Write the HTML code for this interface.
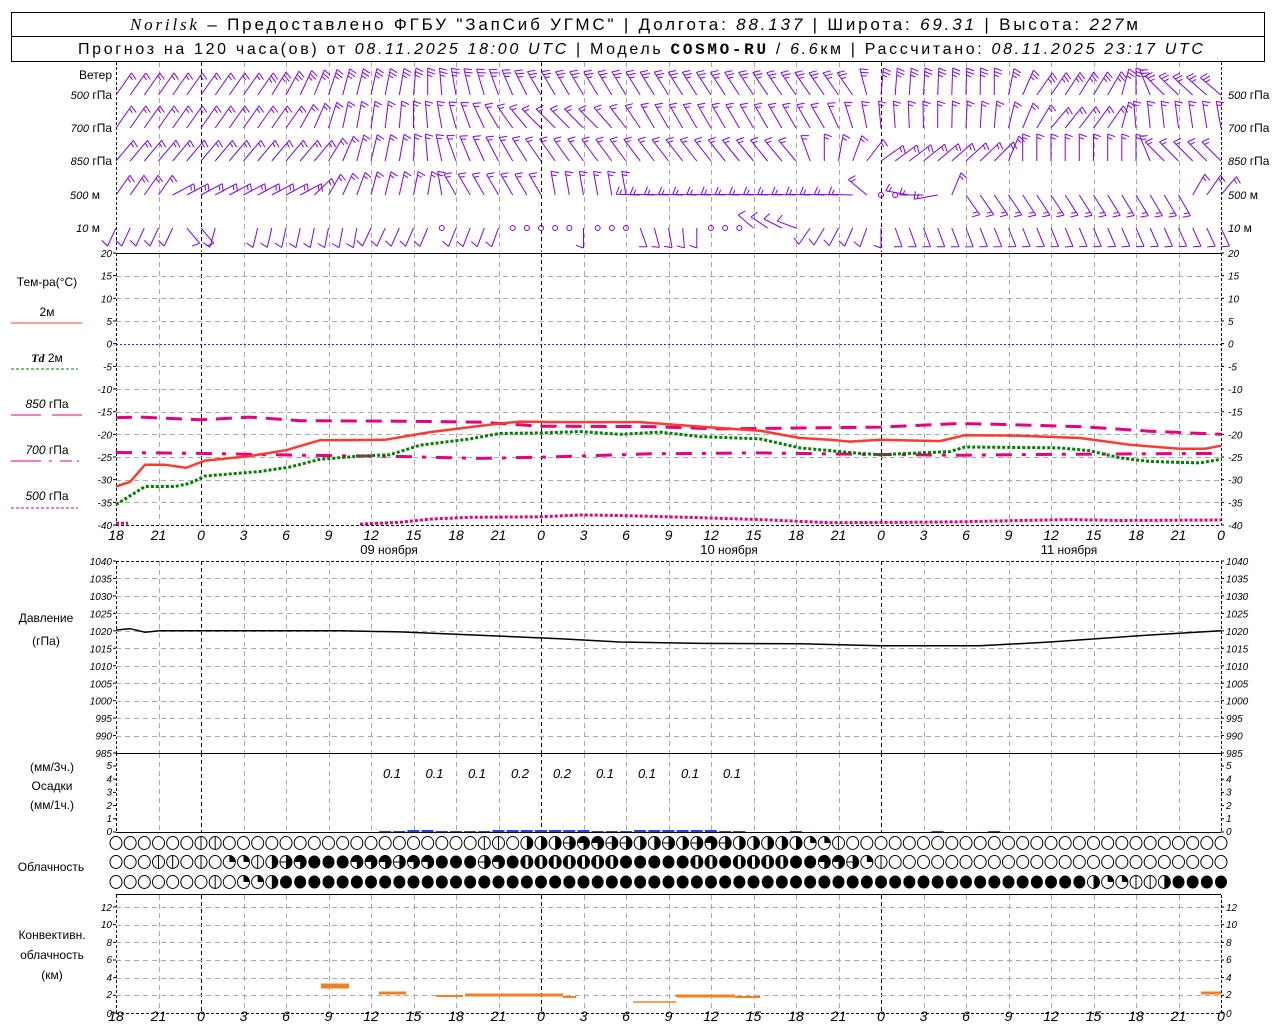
<!DOCTYPE html>
<html><head><meta charset="utf-8">
<style>
html,body{margin:0;padding:0;background:#fff;}
svg{display:block;font-family:"Liberation Sans","DejaVu Sans",sans-serif;}
.t{font-size:12px;fill:#000;}
.n{font-size:10px;font-style:italic;fill:#000;}
.ax{font-size:14px;font-style:italic;fill:#000;}
.pr{font-size:13px;font-style:italic;fill:#000;}
</style></head>
<body>
<svg id="s" width="1280" height="1024" viewBox="0 0 1280 1024" xmlns="http://www.w3.org/2000/svg">
<rect x="0" y="0" width="1280" height="1024" fill="#fff"/>
<g id="grid"></g>
<g id="dyn"></g>
<!-- header -->
<rect x="11.5" y="12.5" width="1253" height="49" fill="none" stroke="#000"/>
<line x1="11" y1="36.5" x2="1265" y2="36.5" stroke="#000"/>
<text x="130" y="30" font-size="17" textLength="1008" lengthAdjust="spacing"><tspan font-family="Liberation Serif,serif" font-style="italic">Norilsk</tspan> – Предоставлено ФГБУ "ЗапСиб УГМС" | Долгота: <tspan font-style="italic">88.137</tspan> | Широта: <tspan font-style="italic">69.31</tspan> | Высота: <tspan font-style="italic">227</tspan>м</text>
<text x="78" y="54" font-size="16" textLength="1125" lengthAdjust="spacing">Прогноз на 120 часа(ов) от <tspan font-style="italic">08.11.2025 18:00 UTC</tspan>  | Модель <tspan font-family="Liberation Mono,monospace" font-weight="bold">COSMO-RU</tspan> / <tspan font-style="italic">6.6</tspan>км | Рассчитано: <tspan font-style="italic">08.11.2025 23:17 UTC</tspan></text>

<!-- wind labels -->
<g class="t" text-anchor="end">
<text x="112" y="79">Ветер</text>
<text x="112" y="99"><tspan font-style="italic" font-size="11">500</tspan> гПа</text>
<text x="112" y="132"><tspan font-style="italic" font-size="11">700</tspan> гПа</text>
<text x="112" y="165"><tspan font-style="italic" font-size="11">850</tspan> гПа</text>
<text x="100" y="199"><tspan font-style="italic" font-size="11">500</tspan> м</text>
<text x="100" y="232"><tspan font-style="italic" font-size="11">10</tspan>   м</text>
</g>
<g class="t">
<text x="1228" y="99"><tspan font-style="italic" font-size="11">500</tspan> гПа</text>
<text x="1228" y="132"><tspan font-style="italic" font-size="11">700</tspan> гПа</text>
<text x="1228" y="165"><tspan font-style="italic" font-size="11">850</tspan> гПа</text>
<text x="1228" y="199"><tspan font-style="italic" font-size="11">500</tspan>  м</text>
<text x="1228" y="232"><tspan font-style="italic" font-size="11">10</tspan>   м</text>
</g>

<!-- temperature legend -->
<g class="t" text-anchor="middle">
<text x="47" y="286">Тем-ра(°С)</text>
<text x="47" y="316">2м</text>
<text x="47" y="362"><tspan font-style="italic" font-weight="bold" font-family="Liberation Serif,serif">Td</tspan>  2м</text>
<text x="47" y="408"><tspan font-style="italic">850</tspan>  гПа</text>
<text x="47" y="454"><tspan font-style="italic">700</tspan>  гПа</text>
<text x="47" y="500"><tspan font-style="italic">500</tspan>  гПа</text>
</g>
<line x1="11" y1="323" x2="82" y2="323" stroke="#ff3b30" stroke-width="1"/>
<line x1="11" y1="369" x2="78" y2="369" stroke="#008000" stroke-width="1" stroke-dasharray="3,2"/>
<line x1="11" y1="415" x2="41" y2="415" stroke="#e6007e"/><line x1="52" y1="415" x2="82" y2="415" stroke="#e6007e"/>
<line x1="11" y1="461" x2="41" y2="461" stroke="#e6007e"/><line x1="49" y1="461" x2="52" y2="461" stroke="#e6007e"/><line x1="60" y1="461" x2="72" y2="461" stroke="#e6007e"/><line x1="77" y1="461" x2="79" y2="461" stroke="#e6007e"/>
<line x1="11" y1="508" x2="78" y2="508" stroke="#e6007e" stroke-dasharray="3,2"/>

<!-- temp axis labels -->
<g class="n" text-anchor="end">
<text x="112" y="257">20</text><text x="112" y="279.7">15</text><text x="112" y="302.3">10</text><text x="112" y="325">5</text><text x="112" y="347.7">0</text><text x="112" y="370.3">-5</text><text x="112" y="393">-10</text><text x="112" y="415.7">-15</text><text x="112" y="438.3">-20</text><text x="112" y="461">-25</text><text x="112" y="483.7">-30</text><text x="112" y="506.3">-35</text><text x="112" y="529">-40</text>
</g>
<g class="n">
<text x="1228" y="257">20</text><text x="1228" y="279.7">15</text><text x="1228" y="302.3">10</text><text x="1228" y="325">5</text><text x="1228" y="347.7">0</text><text x="1228" y="370.3">-5</text><text x="1228" y="393">-10</text><text x="1228" y="415.7">-15</text><text x="1228" y="438.3">-20</text><text x="1228" y="461">-25</text><text x="1228" y="483.7">-30</text><text x="1228" y="506.3">-35</text><text x="1228" y="529">-40</text>
</g>
<g class="ax" text-anchor="middle">
<text x="116" y="540">18</text><text x="158.5" y="540">21</text><text x="201" y="540">0</text><text x="243.5" y="540">3</text><text x="286" y="540">6</text><text x="328.5" y="540">9</text><text x="371" y="540">12</text><text x="413.5" y="540">15</text><text x="456" y="540">18</text><text x="498.5" y="540">21</text><text x="541" y="540">0</text><text x="583.5" y="540">3</text><text x="626" y="540">6</text><text x="668.5" y="540">9</text><text x="711" y="540">12</text><text x="753.5" y="540">15</text><text x="796" y="540">18</text><text x="838.5" y="540">21</text><text x="881" y="540">0</text><text x="923.5" y="540">3</text><text x="966" y="540">6</text><text x="1008.5" y="540">9</text><text x="1051" y="540">12</text><text x="1093.5" y="540">15</text><text x="1136" y="540">18</text><text x="1178.5" y="540">21</text><text x="1221" y="540">0</text>
</g>
<g class="t" text-anchor="middle">
<text x="389" y="554"><tspan font-size="13">09</tspan> ноября</text>
<text x="729" y="554"><tspan font-size="13">10</tspan> ноября</text>
<text x="1069" y="554"><tspan font-size="13">11</tspan> ноября</text>
</g>

<!-- pressure -->
<g class="t" text-anchor="middle"><text x="46" y="622">Давление</text><text x="46" y="645">(гПа)</text></g>
<g class="n" font-size="9" text-anchor="end">
<text x="112" y="565">1040</text><text x="112" y="582.5">1035</text><text x="112" y="599.9">1030</text><text x="112" y="617.4">1025</text><text x="112" y="634.9">1020</text><text x="112" y="652.3">1015</text><text x="112" y="669.8">1010</text><text x="112" y="687.3">1005</text><text x="112" y="704.7">1000</text><text x="112" y="722.2">995</text><text x="112" y="739.7">990</text><text x="112" y="757">985</text>
</g>
<g class="n" font-size="9">
<text x="1226" y="565">1040</text><text x="1226" y="582.5">1035</text><text x="1226" y="599.9">1030</text><text x="1226" y="617.4">1025</text><text x="1226" y="634.9">1020</text><text x="1226" y="652.3">1015</text><text x="1226" y="669.8">1010</text><text x="1226" y="687.3">1005</text><text x="1226" y="704.7">1000</text><text x="1226" y="722.2">995</text><text x="1226" y="739.7">990</text><text x="1226" y="757">985</text>
</g>

<!-- precip -->
<g class="t" text-anchor="middle"><text x="52" y="771">(мм/3ч.)</text><text x="52" y="790">Осадки</text><text x="52" y="809">(мм/1ч.)</text></g>
<g class="n" font-size="9" text-anchor="end">
<text x="112" y="769">5</text><text x="112" y="782.5">4</text><text x="112" y="795.7">3</text><text x="112" y="808.9">2</text><text x="112" y="822">1</text><text x="112" y="835">0</text>
</g>
<g class="n" font-size="9">
<text x="1226" y="769">5</text><text x="1226" y="782.5">4</text><text x="1226" y="795.7">3</text><text x="1226" y="808.9">2</text><text x="1226" y="822">1</text><text x="1226" y="835">0</text>
</g>
<g class="pr" text-anchor="middle">
<text x="392" y="778">0.1</text><text x="434.5" y="778">0.1</text><text x="477" y="778">0.1</text><text x="520" y="778">0.2</text><text x="562" y="778">0.2</text><text x="605" y="778">0.1</text><text x="647" y="778">0.1</text><text x="690" y="778">0.1</text><text x="732" y="778">0.1</text>
</g>

<!-- clouds -->
<text class="t" x="51" y="871" text-anchor="middle">Облачность</text>
<g class="t" text-anchor="middle"><text x="52" y="939">Конвективн.</text><text x="52" y="959">облачность</text><text x="52" y="979">(км)</text></g>
<g class="n" font-size="9" text-anchor="end">
<text x="112" y="911">12</text><text x="112" y="928">10</text><text x="112" y="946">8</text><text x="112" y="963">6</text><text x="112" y="981">4</text><text x="112" y="998">2</text><text x="112" y="1017">0</text>
</g>
<g class="n" font-size="9">
<text x="1226" y="911">12</text><text x="1226" y="928">10</text><text x="1226" y="946">8</text><text x="1226" y="963">6</text><text x="1226" y="981">4</text><text x="1226" y="998">2</text><text x="1226" y="1017">0</text>
</g>
<g class="ax" text-anchor="middle">
<text x="116" y="1021">18</text><text x="158.5" y="1021">21</text><text x="201" y="1021">0</text><text x="243.5" y="1021">3</text><text x="286" y="1021">6</text><text x="328.5" y="1021">9</text><text x="371" y="1021">12</text><text x="413.5" y="1021">15</text><text x="456" y="1021">18</text><text x="498.5" y="1021">21</text><text x="541" y="1021">0</text><text x="583.5" y="1021">3</text><text x="626" y="1021">6</text><text x="668.5" y="1021">9</text><text x="711" y="1021">12</text><text x="753.5" y="1021">15</text><text x="796" y="1021">18</text><text x="838.5" y="1021">21</text><text x="881" y="1021">0</text><text x="923.5" y="1021">3</text><text x="966" y="1021">6</text><text x="1008.5" y="1021">9</text><text x="1051" y="1021">12</text><text x="1093.5" y="1021">15</text><text x="1136" y="1021">18</text><text x="1178.5" y="1021">21</text><text x="1221" y="1021">0</text>
</g>
</svg>
<script>
(function(){
var NS="http://www.w3.org/2000/svg";
var G=document.getElementById("grid"),D=document.getElementById("dyn");
function el(p,tag,a){var e=document.createElementNS(NS,tag);for(var k in a)e.setAttribute(k,a[k]);p.appendChild(e);return e;}
function L(p,x1,y1,x2,y2,c,w,da){var a={x1:x1,y1:y1,x2:x2,y2:y2,stroke:c,"stroke-width":w||1};if(da)a["stroke-dasharray"]=da;return el(p,"line",a);}
function X(h){return 116+h*1105/78;}
var panels=[[62,252],[253,525],[561,753],[753,832],[895,1013]];
for(var k=0;k<=26;k++){
  var x=Math.round(116+k*42.5)+0.5;
  var mid=(k==2||k==10||k==18);
  panels.forEach(function(p){
    if(k==0||k==26) L(G,x,p[0],x,p[1],"#000",1,"3,2");
    else if(mid) L(G,x,p[0],x,p[1],"#000",1,"4,3");
    else L(G,x,p[0],x,p[1],"#aaa",1,"5,4");
  });
}
function hl(y,c,da,w){L(G,116,y,1221,y,c,w||1,da);}
hl(253.5,"#000");
for(var t=15;t>=-35;t-=5){var y=Math.round(253+(20-t)*4.5333)+0.5; if(t==0) hl(y,"#0033ff","2,2"); else hl(y,"#aaa","5,4");}
hl(525.5,"#000","3,2");
for(var i=0;i<=11;i++){var y=Math.round(561+i*17.4545)+0.5; if(i==0) hl(y,"#000","3,2"); else if(i==11) hl(753.5,"#000"); else hl(y,"#aaa","5,4");}
hl(832.5,"#000");
hl(894.5,"#000");
for(var v=2;v<=12;v+=2){hl(Math.round(1013-v*8.83)+0.5,"#aaa","5,4");}
hl(1013.5,"#000","3,2");
[[253,525,13],[561,753,12],[766,832,6],[907,1013,7]].forEach(function(a){
  for(var i=0;i<a[2];i++){var y=a[0]+(a[1]-a[0])*i/(a[2]-1);L(G,113,y,116,y,"#000");L(G,1221,y,1224,y,"#000");}
});
function poly(pts,c,w,da,fy){var s=pts.map(function(p){return X((p[0]-116)/1105*78).toFixed(1)+","+fy(p[1]).toFixed(1);}).join(" ");var a={points:s,fill:"none",stroke:c,"stroke-width":w};if(da)a["stroke-dasharray"]=da;el(D,"polyline",a);}
function TY(t){return 253+(20-t)*4.5333;}
function PY(p){return 561+(1040-p)*3.4909;}
poly([[116,-16.3],[140,-16.2],[200,-16.8],[250,-16.2],[300,-17],[400,-17.1],[480,-17.3],[540,-18.2],[650,-18.3],[720,-18.8],[800,-18.6],[880,-18.4],[960,-17.6],[1000,-17.8],[1080,-18.3],[1150,-19.3],[1221,-20]],"#e6007e",3,"16,9",TY);
poly([[116,-24],[200,-24.2],[300,-24.6],[400,-24.9],[480,-25.3],[550,-25],[650,-24.3],[760,-24.1],[860,-24.4],[960,-24.6],[1060,-24.4],[1221,-24.2]],"#e6007e",3,"16,10,4,10",TY);
poly([[116,-39.6],[128,-39.6]],"#e6007e",3,"3,2",TY);
poly([[360,-39.8],[400,-39.4],[430,-38.7],[470,-38.3],[540,-38.2],[580,-37.8],[620,-37.9],[700,-38.4],[760,-38.8],[830,-39.5],[900,-39.4],[960,-39.3],[1020,-39],[1070,-38.8],[1120,-39],[1221,-38.9]],"#e6007e",3,"3,2",TY);
poly([[116,-35.5],[145,-31.5],[175,-31.5],[190,-30.8],[205,-29.2],[260,-28.2],[290,-27.2],[320,-25.5],[360,-24.8],[390,-24.5],[420,-22.4],[470,-21],[500,-19.8],[540,-19.7],[580,-19.4],[620,-20],[660,-19.5],[700,-20.5],[760,-21],[800,-23],[860,-24.2],[880,-24.5],[950,-23.8],[965,-22.8],[1060,-23],[1090,-23.6],[1120,-25.2],[1150,-26],[1200,-26.3],[1221,-25.5]],"#008000",3,"3,2",TY);
poly([[116,-31.5],[130,-30.5],[145,-26.7],[165,-26.7],[186,-27.4],[205,-25.8],[250,-24.8],[286,-23.5],[320,-21.3],[385,-21.2],[430,-19.5],[470,-18.4],[500,-17.6],[520,-17.2],[560,-17.3],[640,-17.3],[700,-18.3],[760,-19.2],[800,-20.8],[830,-21.2],[850,-21.6],[880,-21.2],[940,-21.5],[965,-20.2],[1020,-20.3],[1080,-20.8],[1130,-22.3],[1180,-23.2],[1205,-23.2],[1221,-22.5]],"#ff3b30",2.5,null,TY);
poly([[116,1020.2],[130,1020.6],[145,1019.6],[160,1020],[340,1020],[400,1019.7],[450,1019.1],[500,1018.5],[560,1017.7],[620,1016.8],[700,1016.4],[800,1016.3],[880,1015.7],[980,1015.7],[1050,1016.8],[1150,1018.8],[1221,1020]],"#000",1.5,null,PY);
var pb={19:1,20:1,21:2,22:2,23:1,24:1,25:1,26:1,27:2,28:2,29:2,30:2,31:2,32:2,33:2,34:1,35:1,36:1,37:2,38:2,39:2,40:2,41:2,42:2,43:1,44:1,48:1,58:1,62:1};
for(var h in pb){el(D,"rect",{x:X(+h-0.5)+1,y:832-pb[h],width:12,height:pb[h],fill:"#1f3fff"});}
[[321,349,986,5],[379,406,993,3],[436,463,996,2],[465,563,995,3],[563,576,997,2],[633,676,1002,1.5],[676,735,996,3],[735,760,997,2],[1201,1221,993,3]].forEach(function(b){el(D,"rect",{x:b[0],y:b[2]-b[3]/2,width:b[1]-b[0],height:b[3],fill:"#f08020"});});
var rows=["000000"+"11"+"000000000000000000"+"11"+"0"+"33374477"+"337374733333"+"221"+"000000000000000000000000000",
"00011010"+"221374"+"666444744"+"666746"+"5555555"+"6"+"666655655556644721"+"000000000000000000000000",
"0000000"+"1"+"0"+"22"+"3"+"666666666666666666666666666666666666666666666666666666666"+"3"+"22"+"11"+"3"+"6666"];
var ry=[843,862,882];
rows.forEach(function(r,ri){
  for(var i=0;i<79;i++){
    var c=r[i],cx=X(i),cy=ry[ri],rx=6,ryy=6.5;
    var g=el(D,"g",{});
    if(c=="6"){el(g,"ellipse",{cx:cx,cy:cy,rx:rx,ry:ryy,fill:"#000"});continue;}
    el(g,"ellipse",{cx:cx,cy:cy,rx:rx,ry:ryy,fill:"#fff",stroke:"#000","stroke-width":1});
    if(c=="1"){L(g,cx,cy-ryy,cx,cy+ryy,"#000");}
    if(c=="5"){el(g,"ellipse",{cx:cx,cy:cy,rx:rx,ry:ryy,fill:"#000"});el(g,"rect",{x:cx-1.5,y:cy-ryy+1,width:3,height:2*ryy-2,fill:"#fff"});}
    if(c=="2"){el(g,"path",{d:"M"+cx+","+cy+"V"+(cy-ryy)+"A"+rx+","+ryy+" 0 0 1 "+(cx+rx)+","+cy+"Z",fill:"#000"});}
    if(c=="3"||c=="7"){el(g,"path",{d:"M"+cx+","+(cy-ryy)+"A"+rx+","+ryy+" 0 0 1 "+cx+","+(cy+ryy)+"Z",fill:"#000"});if(c=="7")L(g,cx-rx,cy,cx+rx,cy,"#000");}
    if(c=="4"){el(g,"path",{d:"M"+cx+","+cy+"H"+(cx-rx)+"A"+rx+","+ryy+" 0 1 1 "+cx+","+(cy+ryy)+"Z",fill:"#000"});}
  }
});
function ip(arr,h){if(h<=arr[0][0])return arr[0][1];for(var i=1;i<arr.length;i++){if(h<=arr[i][0]){var a=arr[i-1],b=arr[i];return a[1]+(b[1]-a[1])*(h-a[0])/(b[0]-a[0]);}}return arr[arr.length-1][1];}
var C="#7f00ff";
var levels=[
 {y:95,L:27,f:function(h){return h<10?2:3;},a:[[0,35],[10,35],[16,15],[20,10],[24,-10],[30,-30],[52,-35],[54,5],[62,0],[65,35],[70,30],[72,0],[74,-45],[78,-50]],calm:[]},
 {y:128,L:27,f:function(h){return 2;},a:[[0,35],[12,35],[16,12],[20,5],[26,-25],[30,-45],[34,-45],[38,-30],[50,-30],[54,-5],[62,5],[66,40],[70,35],[72,-5],[78,-10]],calm:[]},
 {y:161,L:27,f:function(h){return 2;},a:[[0,40],[14,40],[17,15],[20,10],[24,-20],[30,-35],[48,-40],[50,0],[52,20],[54,55],[62,45],[64,0],[72,0],[74,-45],[78,-45]],calm:[]},
 {y:195,L:24,f:function(h){return 2;},a:[[0,35],[3,35],[4,62],[13,62],[15,30],[18,15],[22,10],[24,-30],[30,-30],[31,-10],[36,-10],[37,-88],[52,-88],[53,-50],[56,-80],[58,-100],[60,145],[75,150],[76,30],[78,40]],calm:[54,55]},
 {y:228,L:20,f:function(h){return 1;},a:[[0,205],[4,205],[5,140],[6,140],[7,195],[17,190],[18,205],[27,200],[33,180],[37,160],[41,180],[45,-50],[48,-70],[49,215],[53,200],[55,160],[78,155]],calm:[23,28,29,30,31,32,34,35,36,42,43,44]}
];
var skip10={1:0,8:1,9:1};
levels.forEach(function(lv,li){
  for(var h=0;h<=78;h++){
    var x=X(h);
    if(lv.calm.indexOf(h)>=0){el(D,"circle",{cx:x,cy:lv.y,r:2.5,fill:"none",stroke:C,"stroke-width":1});continue;}
    if(li==4&&skip10[h])continue;
    var a=ip(lv.a,h)*Math.PI/180;
    var ux=Math.sin(a),uy=-Math.cos(a);
    var tx=x+ux*lv.L,ty=lv.y+uy*lv.L;
    var d="M"+x.toFixed(1)+","+lv.y+"L"+tx.toFixed(1)+","+ty.toFixed(1);
    var th=110*Math.PI/180;
    var fx=ux*Math.cos(th)-uy*Math.sin(th),fy=ux*Math.sin(th)+uy*Math.cos(th);
    var n=lv.f(h);
    for(var j=0;j<n;j++){
      var px=tx-ux*3.5*j,py=ty-uy*3.5*j;var fl=(j==n-1&&n>1)?5:8;
      d+="M"+px.toFixed(1)+","+py.toFixed(1)+"l"+(fx*fl).toFixed(1)+","+(fy*fl).toFixed(1);
    }
    el(D,"path",{d:d,stroke:C,"stroke-width":1,fill:"none"});
  }
});
})();
</script>
</body></html>
